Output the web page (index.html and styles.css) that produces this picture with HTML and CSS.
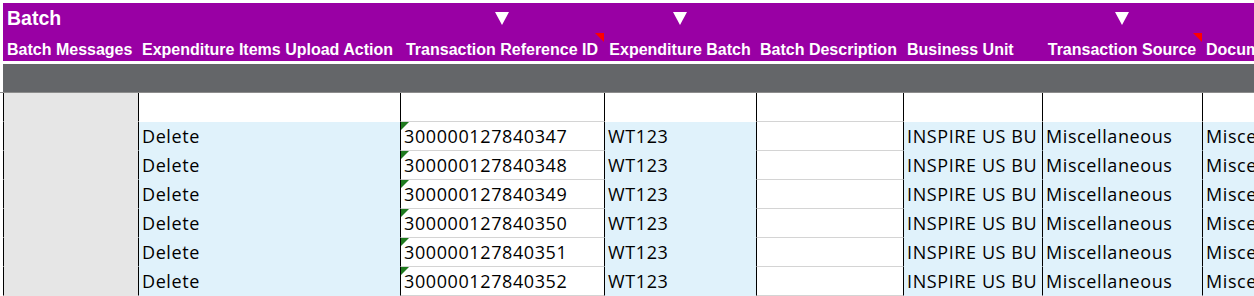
FILE: index.html
```html
<!DOCTYPE html>
<html lang="en">
<head>
<meta charset="utf-8">
<title>Batch</title>
<link rel="stylesheet" href="styles.css">
</head>
<body>
<div class="sheet">
  <div class="band">
    <div class="cols hrow1">
      <div class="hc title">Batch</div>
      <div class="hc"></div>
      <div class="hc mid"><svg class="drop" width="14" height="13" viewBox="0 0 14 13"><polygon points="0,0 14,0 7,13"/></svg></div>
      <div class="hc mid"><svg class="drop" width="14" height="13" viewBox="0 0 14 13"><polygon points="0,0 14,0 7,13"/></svg></div>
      <div class="hc"></div>
      <div class="hc"></div>
      <div class="hc mid"><svg class="drop" width="14" height="13" viewBox="0 0 14 13"><polygon points="0,0 14,0 7,13"/></svg></div>
      <div class="hc"></div>
    </div>
    <div class="cols hrow2">
      <div class="hc lbl">Batch Messages</div>
      <div class="hc lbl">Expenditure Items Upload Action</div>
      <div class="hc lbl ctr note">Transaction Reference ID</div>
      <div class="hc lbl ctr">Expenditure Batch</div>
      <div class="hc lbl">Batch Description</div>
      <div class="hc lbl">Business Unit</div>
      <div class="hc lbl ctr note">Transaction Source</div>
      <div class="hc lbl">Document</div>
    </div>
  </div>
  <div class="bar"><div class="bar-fill"></div></div>
  <div class="cols data">
    <div class="c g"></div><div class="c"></div><div class="c w"></div><div class="c"></div><div class="c w"></div><div class="c"></div><div class="c"></div><div class="c"></div>

    <div class="c g"></div><div class="c b">Delete</div><div class="c w flag">300000127840347</div><div class="c b">WT123</div><div class="c w"></div><div class="c b">INSPIRE US BU</div><div class="c b">Miscellaneous</div><div class="c b">Miscellaneous</div>

    <div class="c g"></div><div class="c b">Delete</div><div class="c w flag">300000127840348</div><div class="c b">WT123</div><div class="c w"></div><div class="c b">INSPIRE US BU</div><div class="c b">Miscellaneous</div><div class="c b">Miscellaneous</div>

    <div class="c g"></div><div class="c b">Delete</div><div class="c w flag">300000127840349</div><div class="c b">WT123</div><div class="c w"></div><div class="c b">INSPIRE US BU</div><div class="c b">Miscellaneous</div><div class="c b">Miscellaneous</div>

    <div class="c g"></div><div class="c b">Delete</div><div class="c w flag">300000127840350</div><div class="c b">WT123</div><div class="c w"></div><div class="c b">INSPIRE US BU</div><div class="c b">Miscellaneous</div><div class="c b">Miscellaneous</div>

    <div class="c g"></div><div class="c b">Delete</div><div class="c w flag">300000127840351</div><div class="c b">WT123</div><div class="c w"></div><div class="c b">INSPIRE US BU</div><div class="c b">Miscellaneous</div><div class="c b">Miscellaneous</div>

    <div class="c g"></div><div class="c b">Delete</div><div class="c w flag">300000127840352</div><div class="c b">WT123</div><div class="c w"></div><div class="c b">INSPIRE US BU</div><div class="c b">Miscellaneous</div><div class="c b">Miscellaneous</div>
  </div>
</div>
</body>
</html>
```
FILE: styles.css
```css
* { box-sizing: border-box; }

html, body {
  margin: 0;
  padding: 0;
  background: #ffffff;
}

body {
  width: 1254px;
  height: 296px;
  overflow: hidden;
  font-family: "Liberation Sans", Arial, sans-serif;
}

.sheet {
  width: 1440px;
  padding-top: 3px;
}

.cols {
  display: grid;
  grid-template-columns: 135px 262px 204px 152px 147px 139px 160px 220px;
}

.band {
  margin-left: 3px;
  background: #9900a4;
}

.hc {
  position: relative;
  display: flex;
  padding-left: 4px;
  color: #ffffff;
  font-weight: bold;
  white-space: nowrap;
}

.hrow1 { height: 30px; }
.hrow2 { height: 28px; }

.title {
  font-size: 19.5px;
  line-height: 22px;
  padding-top: 4px;
  overflow: visible;
}

.mid {
  justify-content: center;
  align-items: center;
  padding-left: 0;
}

.drop { fill: #ffffff; display: block; margin-top: 1px; }

.lbl {
  font-size: 16px;
  line-height: 18px;
  align-items: flex-end;
  padding-bottom: 2px;
}

.ctr {
  justify-content: center;
  padding-left: 0;
}

.note::after {
  content: "";
  position: absolute;
  top: 0;
  right: 0;
  width: 0;
  height: 0;
  border-top: 9px solid #ff0000;
  border-left: 9px solid transparent;
}

.bar {
  margin-top: 3px;
  padding-left: 3px;
  border-bottom: 1px solid #8c8c8c;
}

.bar-fill {
  height: 28px;
  background: #646669;
}

.data { margin-left: 3px; }

.c {
  position: relative;
  height: 29px;
  border-left: 1px solid #000000;
  border-bottom: 1px solid transparent;
  display: flex;
  align-items: flex-end;
  padding: 0 0 3px 3px;
  font-family: "Open Sans", "Noto Sans", sans-serif;
  font-size: 18px;
  line-height: 21px;
  letter-spacing: 0.6px;
  color: #000000;
  white-space: nowrap;
  overflow: hidden;
  background: #ffffff;
}

.g { background: #e6e6e6; }
.b { background: #e0f2fb; }
.w { border-bottom-color: #d4d4d4; }

.flag::before {
  content: "";
  position: absolute;
  top: 0;
  left: 0;
  width: 0;
  height: 0;
  border-top: 8px solid #1f7a1f;
  border-right: 8px solid transparent;
}
```
